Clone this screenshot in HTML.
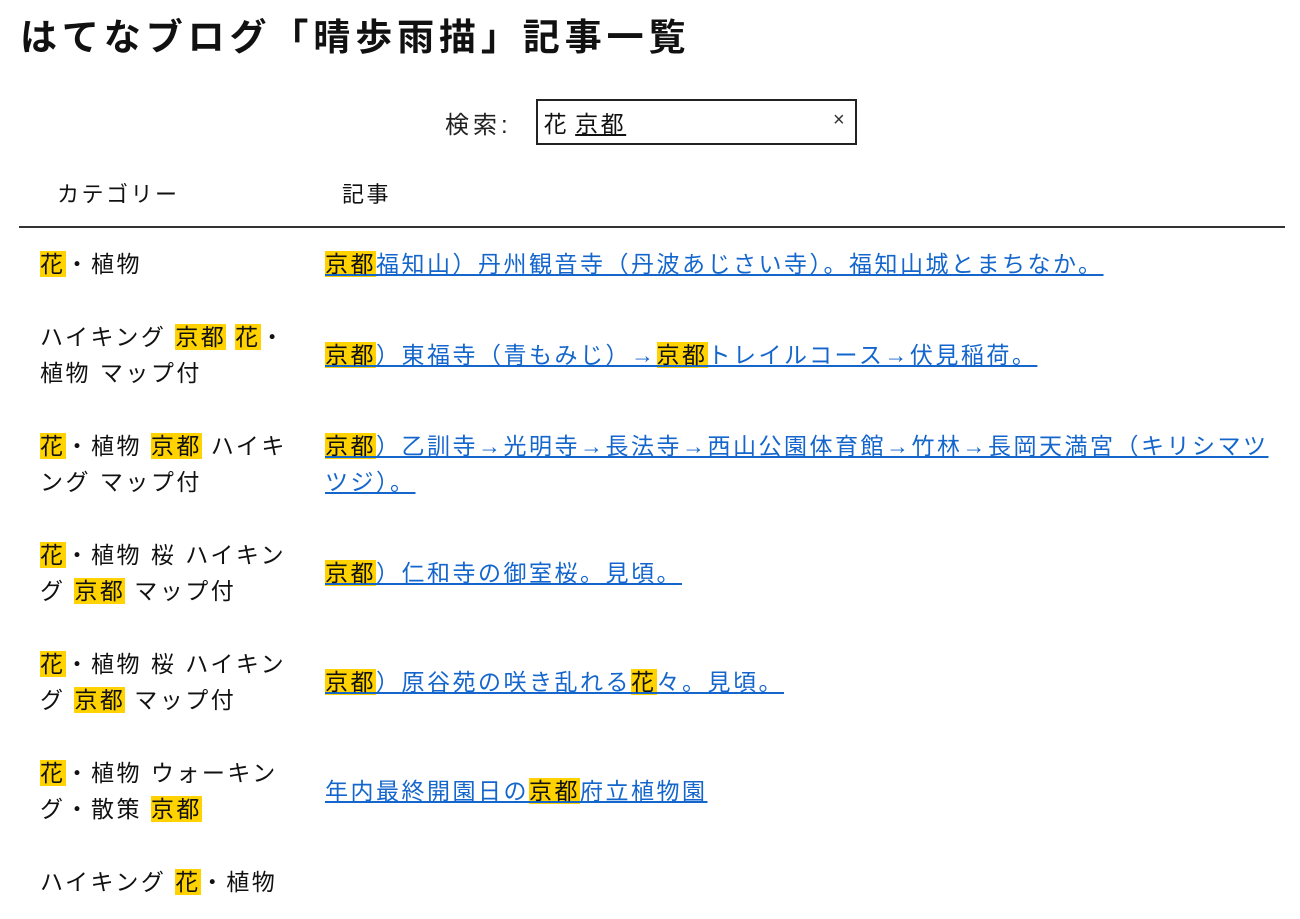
<!DOCTYPE html>
<html><head><meta charset="utf-8"><style>
body{margin:0;background:#fff;color:#111;font-family:"Liberation Sans","Noto Sans CJK JP",sans-serif;font-size:23px;letter-spacing:2.5px}
h1{position:absolute;left:20px;top:12px;margin:0;font-size:37px;line-height:52px;font-weight:bold;letter-spacing:4.9px;white-space:nowrap}
.search{position:absolute;left:445px;top:99px;height:46px;display:flex;align-items:center;font-size:24px;}
.search .lbl{margin-right:24px;color:#222;letter-spacing:4px}
.box{border:2px solid #222;box-sizing:border-box;width:321px;height:46px;position:relative;display:flex;align-items:center;padding-left:6px;font-size:23px}
.box u{margin-left:6px}
.box .x{position:absolute;right:10px;top:8px;font-size:20px;color:#333;letter-spacing:0}
table{position:absolute;left:19px;top:160px;width:1266px;border-collapse:collapse;table-layout:fixed}
th{font-weight:normal;text-align:left;height:66px;padding:0;border-bottom:2px solid #333;vertical-align:middle;font-size:22px}
th.c{padding-left:38px}th.a{padding-left:24px}
td{vertical-align:middle;padding:18px 0 19px 0;line-height:36px}
td.c{padding-left:21px;padding-right:30px}
td.a{padding-left:7px;padding-right:3px}
col.c{width:299px}
mark{background:#ffd200;color:#111}
a{color:#1466cc;text-decoration:underline}
a mark{color:#111}
</style></head><body>
<h1>はてなブログ「晴歩雨描」記事一覧</h1>
<div class="search"><span class="lbl">検索:</span><div class="box">花 <u>京都</u><span class="x">×</span></div></div>
<table>
<colgroup><col class="c"><col></colgroup>
<tr><th class="c">カテゴリー</th><th class="a">記事</th></tr>
<tr><td class="c"><mark>花</mark>・植物</td><td class="a"><a><mark>京都</mark>福知山）丹州観音寺（丹波あじさい寺）。福知山城とまちなか。</a></td></tr>
<tr><td class="c">ハイキング <mark>京都</mark> <mark>花</mark>・植物 マップ付</td><td class="a"><a><mark>京都</mark>）東福寺（青もみじ）→<mark>京都</mark>トレイルコース→伏見稲荷。</a></td></tr>
<tr><td class="c"><mark>花</mark>・植物 <mark>京都</mark> ハイキング マップ付</td><td class="a"><a><mark>京都</mark>）乙訓寺→光明寺→長法寺→西山公園体育館→竹林→長岡天満宮（キリシマツツジ）。</a></td></tr>
<tr><td class="c"><mark>花</mark>・植物 桜 ハイキング <mark>京都</mark> マップ付</td><td class="a"><a><mark>京都</mark>）仁和寺の御室桜。見頃。</a></td></tr>
<tr><td class="c"><mark>花</mark>・植物 桜 ハイキング <mark>京都</mark> マップ付</td><td class="a"><a><mark>京都</mark>）原谷苑の咲き乱れる<mark>花</mark>々。見頃。</a></td></tr>
<tr><td class="c"><mark>花</mark>・植物 ウォーキング・散策 <mark>京都</mark></td><td class="a"><a>年内最終開園日の<mark>京都</mark>府立植物園</a></td></tr>
<tr><td class="c">ハイキング <mark>花</mark>・植物</td><td class="a"></td></tr>
</table>
</body></html>
